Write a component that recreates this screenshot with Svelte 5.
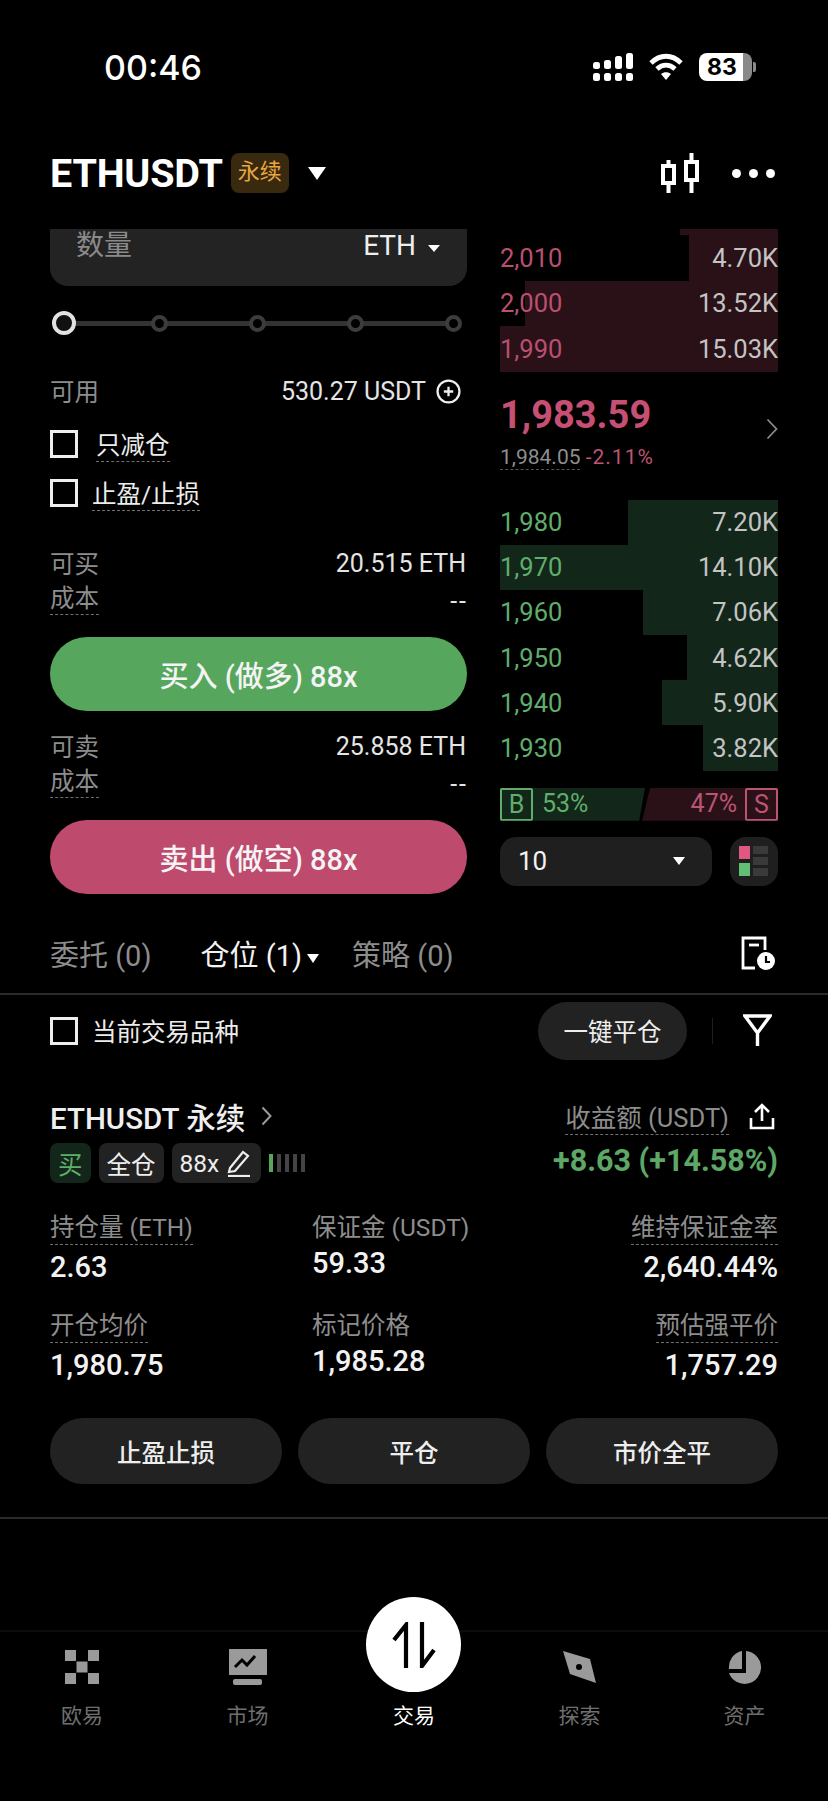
<script>
  const asks = [
    { price: '2,010', size: '4.70K', width: 89 },
    { price: '2,000', size: '13.52K', width: 253 },
    { price: '1,990', size: '15.03K', width: 278 }
  ];
  const bids = [
    { price: '1,980', size: '7.20K', width: 150 },
    { price: '1,970', size: '14.10K', width: 278 },
    { price: '1,960', size: '7.06K', width: 135 },
    { price: '1,950', size: '4.62K', width: 91 },
    { price: '1,940', size: '5.90K', width: 116 },
    { price: '1,930', size: '3.82K', width: 75 }
  ];
  const stops = [0, 1, 2, 3, 4];
  const stats = [
    { label: '持仓量 (ETH)', value: '2.63', dash: true },
    { label: '保证金 (USDT)', value: '59.33', mid: true },
    { label: '维持保证金率', value: '2,640.44%', dash: true, right: true },
    { label: '开仓均价', value: '1,980.75', dash: true },
    { label: '标记价格', value: '1,985.28', mid: true },
    { label: '预估强平价', value: '1,757.29', dash: true, right: true }
  ];
  const actions = ['止盈止损', '平仓', '市价全平'];
  const nav = ['欧易', '市场', '交易', '探索', '资产'];
</script>

<div class="app">
  <div class="status">
    <span class="time">00:46</span>
    <div class="status-icons">
      <svg width="40" height="28" viewBox="0 0 40 28" fill="#fff">
        <rect x="0" y="9" width="7" height="7" rx="2.5" /><rect x="0" y="20" width="7" height="8" rx="2.5" />
        <rect x="11" y="7" width="7" height="9" rx="2.5" /><rect x="11" y="20" width="7" height="8" rx="2.5" />
        <rect x="22" y="3" width="7" height="13" rx="2.5" /><rect x="22" y="20" width="7" height="8" rx="2.5" />
        <rect x="33" y="0" width="7" height="16" rx="2.5" /><rect x="33" y="20" width="7" height="8" rx="2.5" />
      </svg>
      <svg width="34" height="28" viewBox="0 0 34 28" fill="none" stroke="#fff" stroke-width="4.8">
        <path d="M2 10c9-9 21-9 30 0" /><path d="M8 16c5.500-5 12.500-5 18 0" /><path d="M17 27l-5-6c3-2.500 7-2.500 10 0z" fill="#fff" stroke="none" />
      </svg>
      <div class="battery"><span>83</span></div>
    </div>
  </div>

  <header class="top">
    <h1>ETHUSDT</h1>
    <span class="perp">永续</span>
    <i class="caret big"></i>
    <div class="top-right">
      <svg width="38" height="40" viewBox="0 0 38 40" fill="none" stroke="#fff" stroke-width="4">
        <rect x="2" y="13" width="11" height="17" /><path d="M7.500 7v6M7.500 30v10" />
        <rect x="25" y="9" width="11" height="18" /><path d="M30.500 0v9M30.500 27v13" />
      </svg>
      <div class="dots"><b></b><b></b><b></b></div>
    </div>
  </header>

  <section class="trade">
    <div class="form">
      <div class="qty">
        <span class="qty-label">数量</span>
        <span class="qty-unit">ETH<i class="caret small"></i></span>
      </div>
      <div class="slider">
        {#each stops as stop}
          <span class="stop" class:first={stop === 0}></span>
        {/each}
      </div>
      <div class="line avail">
        <span class="muted">可用</span>
        <span class="value">530.27 USDT
          <svg width="25" height="25" viewBox="0 0 24 24" fill="none" stroke="#eee" stroke-width="2.2"><circle cx="12" cy="12" r="10.500" /><path d="M7.500 12h9M12 7.500v9" /></svg>
        </span>
      </div>
      <label class="check first-check"><span class="box"></span><span class="dash light">只减仓</span></label>
      <label class="check"><span class="box"></span><span class="dash light">止盈/止损</span></label>

      <div class="line can"><span class="muted">可买</span><span class="value">20.515 ETH</span></div>
      <div class="line cost"><span class="muted dash">成本</span><span class="value none">--</span></div>
      <button class="cta buy">买入 (做多) 88x</button>
      <div class="line can after"><span class="muted">可卖</span><span class="value">25.858 ETH</span></div>
      <div class="line cost"><span class="muted dash">成本</span><span class="value none">--</span></div>
      <button class="cta sell">卖出 (做空) 88x</button>
    </div>

    <div class="book">
      <div class="rows">
        <div class="sliver"></div>
        {#each asks as row}
          <div class="row ask">
            <span class="bar" style="width: {row.width}px"></span>
            <span class="price">{row.price}</span>
            <span class="size">{row.size}</span>
          </div>
        {/each}
      </div>
      <div class="last">
        <div>
          <div class="last-price">1,983.59</div>
          <div class="mark"><span class="mark-num">1,984.05</span> <span class="pct">-2.11%</span></div>
        </div>
        <svg class="last-arrow" width="12" height="22" viewBox="0 0 12 22" fill="none" stroke="#8a8a8a" stroke-width="1.800"><path d="M1.500 1.500l9 9.500-9 9.500" /></svg>
      </div>
      <div class="rows">
        {#each bids as row}
          <div class="row bid">
            <span class="bar" style="width: {row.width}px"></span>
            <span class="price">{row.price}</span>
            <span class="size">{row.size}</span>
          </div>
        {/each}
      </div>
      <div class="ratio">
        <div class="ratio-buy"><span class="tag">B</span>53%</div>
        <div class="ratio-sell">47%<span class="tag">S</span></div>
      </div>
      <div class="depth">
        <div class="select">10<i class="caret mid"></i></div>
        <div class="layout">
          <svg width="30" height="30" viewBox="0 0 30 30">
            <rect x="0" y="0" width="11" height="13" fill="#e0577f" /><rect x="0" y="17" width="11" height="13" fill="#62c076" />
            <rect x="14" y="0" width="15" height="8" fill="#3a3a3a" /><rect x="14" y="11" width="15" height="8" fill="#3a3a3a" /><rect x="14" y="22" width="15" height="8" fill="#3a3a3a" />
          </svg>
        </div>
      </div>
    </div>
  </section>

  <nav class="tabs">
    <span class="tab">委托 (0)</span>
    <span class="tab on">仓位 (1)<i class="caret tiny"></i></span>
    <span class="tab">策略 (0)</span>
    <svg class="history" width="34" height="34" viewBox="0 0 34 34" fill="none" stroke="#fff" stroke-width="2.800">
      <path d="M24 14V2H2v30h12" /><path d="M8 9h10" />
      <circle cx="25" cy="25" r="9" fill="#fff" stroke="none" /><path d="M25 20v6h4" stroke="#000" stroke-width="2.200" />
    </svg>
  </nav>

  <div class="filter">
    <label class="check"><span class="box"></span><span class="light">当前交易品种</span></label>
    <button class="close-all">一键平仓</button>
    <span class="sep"></span>
    <svg width="29" height="33" viewBox="0 0 29 33" fill="none" stroke="#fff" stroke-width="3.4"><path d="M2 2h25L14.500 19zM14.500 19v13" /></svg>
  </div>

  <section class="position">
    <div class="pos-head">
      <div>
        <div class="pos-title">ETHUSDT 永续
          <svg width="11" height="20" viewBox="0 0 11 20" fill="none" stroke="#999" stroke-width="2"><path d="M1.500 1.500l8 8.500-8 8.500" /></svg>
        </div>
        <div class="chips">
          <span class="chip long">买</span>
          <span class="chip">全仓</span>
          <span class="chip lever">88x
            <svg width="24" height="28" viewBox="0 0 24 28" fill="none" stroke="#eee" stroke-width="2.200"><path d="M3 19L16 3l5 4L8 22l-6 1z" /><path d="M1 27h22" /></svg>
          </span>
          <span class="lev"><b class="on"></b><b></b><b></b><b></b><b></b></span>
        </div>
      </div>
      <div class="pnl">
        <div class="pnl-label">
          <span class="muted dash">收益额 (USDT)</span>
          <svg width="26" height="27" viewBox="0 0 26 27" fill="none" stroke="#fff" stroke-width="2.600"><path d="M13 18V2M6 9l7-7 7 7M2 15v10h22V15" /></svg>
        </div>
        <div class="pnl-value">+8.63 (+14.58%)</div>
      </div>
    </div>

    <div class="stats">
      {#each stats as item}
        <div class="stat" class:right={item.right} class:mid={item.mid}>
          <span class="muted" class:dash={item.dash}>{item.label}</span>
          <span class="stat-value">{item.value}</span>
        </div>
      {/each}
    </div>

    <div class="actions">
      {#each actions as action}
        <button>{action}</button>
      {/each}
    </div>
  </section>

  <footer class="nav">
    <div class="fab">
      <svg width="44" height="46" viewBox="0 0 44 46" fill="none" stroke="#000" stroke-width="4.200"><path d="M2 18L14 3v43M30 0v44l12-16" /></svg>
    </div>
    {#each nav as item, i}
      <div class="nav-item" class:active={i === 2}>
        <div class="nav-icon">
          {#if i === 0}
            <svg width="34" height="34" viewBox="0 0 34 34" fill="#9a9a9a"><rect width="11" height="11" /><rect x="23" width="11" height="11" /><rect x="11.500" y="11.500" width="11" height="11" /><rect y="23" width="11" height="11" /><rect x="23" y="23" width="11" height="11" /></svg>
          {:else if i === 1}
            <svg width="38" height="36" viewBox="0 0 38 36" fill="#9a9a9a"><rect width="38" height="26" /><rect x="4" y="30" width="29" height="6" rx="2" /><path d="M6 18l7-7 5 5 8-9" fill="none" stroke="#000" stroke-width="3" /></svg>
          {:else if i === 3}
            <svg width="34" height="34" viewBox="0 0 34 34" fill="#9a9a9a"><path d="M0 1l27 8 6 24-26-9z" /><circle cx="16" cy="17" r="3" fill="#000" /></svg>
          {:else if i === 4}
            <svg width="33" height="34" viewBox="0 0 33 34" fill="#9a9a9a"><path d="M14 1v18H1A16 16.500 0 0 1 14 1zM18 1a16.500 16.500 0 1 1-17 22h17z" /></svg>
          {/if}
        </div>
        <span>{item}</span>
      </div>
    {/each}
  </footer>
</div>

<style>
  :global(body) { margin: 0; background: #000; }
  .app {
    position: relative;
    display: flex;
    flex-direction: column;
    width: 828px;
    height: 1801px;
    overflow: hidden;
    color: #eee;
    background: #000;
    font-family: Roboto, "Noto Sans CJK SC", sans-serif;
    font-size: 24.500px;
  }
  button { border: 0; font-family: inherit; color: inherit; padding: 0; }
  .caret { display: inline-block; width: 0; height: 0; border-style: solid; border-color: #fff transparent transparent; }
  .caret.big { margin-left: 19px; border-width: 13px 9.500px 0; }
  .caret.small { margin-left: 12px; border-width: 7px 6px 0; vertical-align: 3px; }
  .caret.mid { border-width: 8px 6.500px 0; }
  .caret.tiny { margin-left: 5px; border-width: 9px 6px 0; vertical-align: 3px; }

  .status { display: flex; justify-content: space-between; align-items: center; height: 134px; padding: 0 76px 0 104px; box-sizing: border-box; }
  .time { font-family: Inter, sans-serif; font-size: 34px; font-weight: 500; color: #fff; }
  .status-icons { display: flex; align-items: center; gap: 16px; }
  .battery { position: relative; width: 53px; height: 28px; border-radius: 8px; background: linear-gradient(90deg, #fff 83%, #8a8a8a 83%); display: flex; align-items: center; padding-left: 8px; box-sizing: border-box; }
  .battery::after { content: ''; position: absolute; right: -4px; top: 9px; width: 3px; height: 10px; border-radius: 0 2px 2px 0; background: #8a8a8a; }
  .battery span { color: #000; font-family: Inter, sans-serif; font-size: 23px; font-weight: 700; }

  .top { display: flex; align-items: center; height: 78px; margin-bottom: 17px; padding: 0 53px 0 50px; }
  h1 { margin: 0; font-family: Roboto, sans-serif; font-size: 39.500px; font-weight: 700; color: #fff; letter-spacing: -.2px; }
  .perp { margin-left: 8px; padding: 0 7px; height: 40px; line-height: 38px; border-radius: 8px; background: #38290f; color: #e8a740; font-size: 22px; }
  .top-right { display: flex; align-items: center; gap: 33px; margin-left: auto; }
  .dots { display: flex; gap: 8px; }
  .dots b { width: 9px; height: 9px; border-radius: 50%; background: #fff; }

  .trade { display: grid; grid-template-columns: 417px 278px; gap: 33px; padding: 0 50px; height: 663px; }
  .qty { display: flex; justify-content: space-between; height: 57px; box-sizing: border-box; padding: 1px 27px 0 26px; border-radius: 0 0 18px 18px; background: #232323; line-height: 32px; font-size: 28px; }
  .qty-label { color: #8a8a8a; }
  .qty-unit { color: #eee; font-size: 28px; }

  .slider { position: relative; display: flex; justify-content: space-between; align-items: center; height: 26px; margin-top: 24px; padding: 0 5px 0 2px; }
  .slider::before { content: ''; position: absolute; left: 10px; right: 10px; top: 11px; height: 5px; background: #333; }
  .stop { position: relative; width: 9px; height: 9px; border: 4px solid #3c3c3c; border-radius: 50%; background: #000; }
  .stop.first { width: 16px; height: 16px; margin-right: -6px; border-color: #e2e2e2; background: #111; }

  .line { display: flex; justify-content: space-between; align-items: center; height: 34px; padding-right: 1px; }
  .muted { color: #8d8d8d; }
  .value { display: flex; align-items: center; gap: 10px; margin-top: 3px; color: #e4e4e4; font-size: 25px; }
  .value.none { margin-top: 9px; font-size: 25px; letter-spacing: 2px; margin-right: -2px; }
  .dash { border-bottom: 1.500px dashed #6f6f6f; }
  .light { color: #ececec; }
  .avail { margin-top: 37px; padding-right: 6px; }
  .check { display: flex; align-items: center; gap: 14px; height: 34px; font-size: 24.500px; }
  .box { flex: none; width: 22px; height: 22px; border: 3px solid #eee; }
  .first-check { margin-top: 20px; }
  .first-check .dash { margin-left: 4px; }
  .check + .check { margin-top: 15px; }
  .can { margin-top: 35px; }
  .can.after { margin-top: 17px; }
  .cost { margin-top: 1px; }
  .cta { display: block; width: 417px; height: 74px; margin-top: 23px; border-radius: 37px; color: #f4f4f4; font-size: 29px; font-weight: 500; }
  .buy { background: #56a65d; }
  .sell { background: #be4a6e; }

  .rows { display: flex; flex-direction: column; }
  .sliver { align-self: flex-end; width: 98px; height: 6px; background: #2a1118; }
  .row { position: relative; display: flex; justify-content: space-between; align-items: center; height: 45.200px; font-size: 25.500px; }
  .ask { height: 45.500px; }
  .row span { position: relative; }
  .row .bar { position: absolute; top: 0; right: 0; bottom: 0; }
  .ask .bar { background: #2a1118; }
  .bid .bar { background: #13261a; }
  .ask .price { color: #b9506f; }
  .bid .price { color: #5fae6b; }
  .size { color: #c4c4c4; }
  .last { display: flex; justify-content: space-between; align-items: center; height: 128px; box-sizing: border-box; padding-bottom: 8px; }
  .last-price { font-size: 38px; font-weight: 700; color: #c64f74; line-height: 44px; }
  .last-arrow { margin-bottom: 6px; }
  .mark { margin-top: 7px; font-size: 21px; line-height: 26px; }
  .mark-num { color: #8e8e8e; border-bottom: 1.500px dashed #555; }
  .pct { color: #bd5474; letter-spacing: 1px; }

  .ratio { display: flex; margin-top: 17px; height: 33px; font-size: 25px; line-height: 31px; }
  .ratio-buy, .ratio-sell { display: flex; align-items: stretch; gap: 9px; }
  .ratio-buy { flex: none; width: 145px; color: #5fae6b; background: #13261a; clip-path: polygon(0 0, 100% 0, 96% 100%, 0 100%); }
  .ratio-sell { flex: none; width: 136px; margin-left: -3px; justify-content: flex-end; color: #bd5474; background: #2a1118; clip-path: polygon(6% 0, 100% 0, 100% 100%, 0 100%); gap: 8px; }
  .tag { width: 29px; height: 29px; border: 2px solid; border-radius: 2px; text-align: center; line-height: 29px; }
  .depth { display: flex; justify-content: space-between; margin-top: 16px; }
  .select { display: flex; justify-content: space-between; align-items: center; width: 212px; height: 49px; box-sizing: border-box; padding: 0 27px 0 18px; border-radius: 16px; background: #1f1f1f; font-size: 26px; color: #f2f2f2; }
  .layout { display: flex; justify-content: center; align-items: center; width: 48px; height: 49px; border-radius: 16px; background: #1f1f1f; }
  .layout svg { width: 30px; height: 30px; }

  .tabs { display: flex; align-items: center; height: 103px; box-sizing: border-box; padding: 20px 53px 0 50px; border-bottom: 2px solid #2a2a2a; font-size: 29px; color: #8d8d8d; }
  .tabs .tab { margin-right: 49px; }
  .tabs .tab.on { margin-right: 33px; color: #f3f3f3; }
  .history { margin-left: auto; }

  .filter { display: flex; align-items: center; height: 71px; padding: 0 56px 0 50px; }
  .close-all { margin-left: auto; width: 149px; height: 58px; border-radius: 29px; background: #222; font-size: 24.500px; }
  .sep { width: 1px; height: 26px; margin: 0 30px 0 25px; background: #1f1f1f; }

  .position { padding: 0 50px; }
  .pos-head { display: flex; justify-content: space-between; margin-top: 33px; }
  .pos-title { display: flex; align-items: center; gap: 16px; height: 34px; font-size: 29.500px; font-weight: 500; color: #efefef; }
  .chips { display: flex; align-items: center; gap: 8px; margin-top: 10px; height: 40px; }
  .chip { display: flex; align-items: center; gap: 7px; height: 40px; padding: 0 8px; border-radius: 8px; background: #222; font-size: 24.500px; color: #eee; }
  .chip.lever { gap: 8px; padding: 0 10px 0 8px; }
  .chip.long { background: #13261a; color: #5fae6b; }
  .lev { display: flex; gap: 4px; }
  .lev b { width: 4px; height: 18px; background: #444; }
  .lev b.on { background: #56a65d; }
  .pnl { display: flex; flex-direction: column; align-items: flex-end; }
  .pnl-label { display: flex; align-items: center; gap: 20px; height: 34px; padding-right: 3px; font-size: 25.500px; }
  .pnl-value { margin-top: 8px; font-size: 30.500px; font-weight: 700; line-height: 40px; color: #5da866; }

  .stats { display: grid; grid-template-columns: 262px 1fr auto; row-gap: 24px; margin-top: 28px; }
  .stat { display: flex; flex-direction: column; align-items: flex-start; }
  .stat .muted { line-height: 33px; }
  .stat.right { align-items: flex-end; }
  .stat-value { margin-top: 4px; line-height: 36px; font-size: 29px; font-weight: 500; color: #f2f2f2; }
  .stat.mid .stat-value { margin-top: 1px; }

  .actions { display: grid; grid-template-columns: repeat(3, 1fr); gap: 16px; margin-top: 35px; padding-bottom: 33px; }
  .actions button { height: 66px; border-radius: 33px; background: #222; font-size: 24.500px; font-weight: 500; }
  .position::after { content: ''; display: block; height: 2px; margin: 0 -50px; background: #2a2a2a; }

  .nav { position: absolute; left: 0; right: 0; top: 1630px; display: grid; grid-template-columns: 164px 167px 166px 165px 165px; border-top: 2px solid #0c0c0e; }
  .nav-item { display: flex; flex-direction: column; align-items: center; color: #6f6f6f; font-size: 21px; }
  .nav-item.active { color: #fff; }
  .nav-icon { display: flex; justify-content: center; align-items: center; height: 40px; margin-top: 15px; }
  .nav-item span { margin-top: 14px; line-height: 30px; }
  .fab { position: absolute; left: 366px; top: -35px; display: flex; justify-content: center; align-items: center; width: 95px; height: 95px; border-radius: 50%; background: #fff; }
</style>
